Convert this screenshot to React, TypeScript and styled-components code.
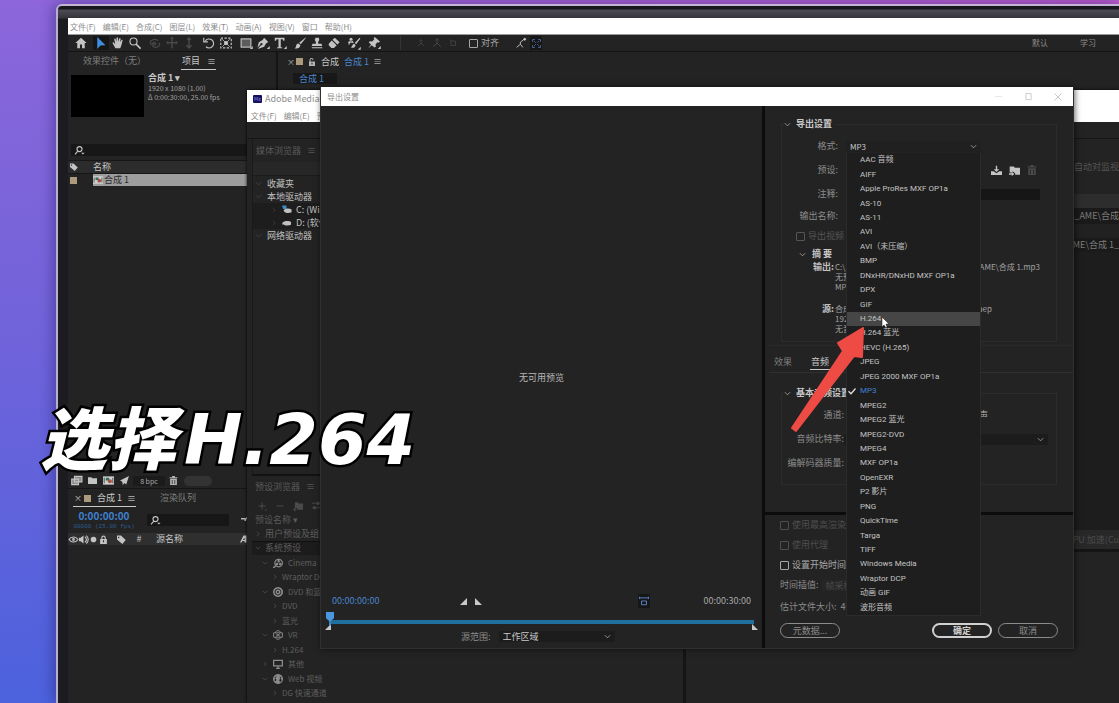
import React from 'react';
import styled, { createGlobalStyle, css } from 'styled-components';

const Global = createGlobalStyle`
  * { box-sizing: border-box; }
  body { margin: 0; overflow: hidden; }
  body, button, input, select {
    font-family: "Noto Sans CJK SC", "Noto Sans", sans-serif;
    font-size: 9px;
    line-height: 12px;
  }
  button, input, select { color: inherit; margin: 0; }
  ul { list-style: none; margin: 0; padding: 0; }
`;

/* ---------- desk and monitor ---------- */

const Desk = styled.div`
  height: 100vh;
  overflow: hidden;
  display: flex;
  position: relative;
  padding: 4px 0 0 56px;
  background:
    linear-gradient(90deg, rgba(190, 90, 200, 0) 0%, rgba(190, 90, 200, 0.9) 100%) top / 100% 5px no-repeat,
    linear-gradient(180deg, #8c66da 0%, #7263da 45%, #4c62dd 100%);
`;

const Bezel = styled.div`
  flex: 1;
  min-width: 0;
  display: flex;
  padding: 12px 0 0 10px;
  border-top: 2px solid #c3b4d6;
  border-left: 2px solid #b9afd2;
  border-top-left-radius: 6px;
  background: linear-gradient(180deg, #18181c 0, #18181c 3px, #4c4a52 4px, #35343b 12px, #1b1b20 13px);
  box-shadow: -2px 0 14px rgba(30, 20, 90, 0.45);
`;

const Screen = styled.main`
  flex: 1;
  min-width: 0;
  position: relative;
  display: flex;
  flex-direction: column;
  background: #232323;
  color: #b4b4b4;
  overflow: hidden;
`;

/* ---------- shared parts ---------- */

const MenuBar = styled.nav<{ $h: number }>`
  flex: none;
  height: ${(p) => p.$h}px;
  display: flex;
  align-items: center;
  gap: 7px;
  padding: 2px 4px 0 2px;
  background: #fff;
  color: #8d8d8d;
`;

const MenuItem = styled.button`
  border: 0;
  padding: 0;
  background: none;
  font-size: 8px;
  white-space: nowrap;
`;

const Tool = styled.button<{ $dim?: boolean; $on?: boolean; $w?: number }>`
  flex: none;
  width: ${(p) => p.$w ?? 16}px;
  height: 14px;
  padding: 0;
  border: 0;
  display: grid;
  place-items: center;
  background: ${(p) => (p.$on ? '#161616' : 'none')};
  color: ${(p) => (p.$dim ? '#4a4a4a' : '#c4c4c4')};
`;

const Svg = styled.svg<{ $s?: number }>`
  flex: none;
  display: block;
  width: ${(p) => p.$s ?? 13}px;
  height: ${(p) => p.$s ?? 13}px;
  fill: currentColor;
  overflow: visible;
`;

type IconName =
  | 'home' | 'arrow' | 'hand' | 'zoom' | 'orbit' | 'pan' | 'dolly' | 'rotate' | 'anchor' | 'rect' | 'pen'
  | 'type' | 'brush' | 'stamp' | 'eraser' | 'roto' | 'pin' | 'axis' | 'snap' | 'expand' | 'menu' | 'find'
  | 'tag' | 'comp' | 'footage' | 'folder' | 'rocket' | 'trash' | 'lock' | 'unlock' | 'eye' | 'sound' | 'dot'
  | 'drive' | 'osdrive' | 'disc' | 'reel' | 'vr' | 'monitor' | 'globe' | 'plus' | 'minus' | 'newfolder' | 'sliders'
  | 'save' | 'import' | 'down' | 'right' | 'check' | 'shy' | 'font' | 'cube';

const line = { fill: 'none', stroke: 'currentColor', strokeWidth: 1.5 } as const;

const shapes: Record<IconName, React.ReactNode> = {
  home: <path d="M8 1 0.5 8H3v7h3.600v-5h2.800v5H13V8h2.500z" />,
  arrow: <path d="M3 0v16l4.200-4.600L14 11z" fill="#3f8ee0" />,
  hand: <path d="M4.500 15 1 8.500c-.6-1.200.7-1.800 1.500-1L4.300 9.500 3 3c0-1.200 1.600-1.300 1.900-.2L6 6.500V1.300C6 0 7.900 0 8 1.300l.3 5L9.600 2c.4-1.200 2-.8 1.800.5l-.6 4.500 1.800-3c.7-.9 1.900-.3 1.500.8L12.500 11 11 15z" />,
  zoom: <g {...line}><circle cx="6" cy="6" r="4.700" /><path d="m9.500 9.500 6 6" strokeWidth="2" /></g>,
  orbit: <g {...line}><path d="M3 10a5 3.500 0 1 1 9-5M13 8a5 3.500 0 1 1-6-1" /><circle cx="7.500" cy="9" r="1.500" /></g>,
  pan: <g {...line} strokeWidth={2}><path d="M8 0v15M1 7.500h14" /><path d="m5.500 2.500 2.500-2 2.500 2M3 5 1 7.500 3 10M13 5l2 2.500-2 2.500" strokeWidth={1} /></g>,
  dolly: <g {...line} strokeWidth={2}><path d="M8 0v14M4.500 11 8 14.500l3.500-3.500M5.500 3h5" /></g>,
  rotate: <g {...line}><path d="M3 5.500a6 6 0 1 1 1 7.500" /><path d="M1 1v5.500h5.500" /></g>,
  anchor: <g {...line}><rect x="1" y="1.500" width="14" height="13" strokeDasharray="3 2" /><circle cx="8" cy="8" r="2" fill="currentColor" /><path d="m3 3 10 10M13 3 3 13" strokeWidth={1} /></g>,
  rect: <g><rect x="1.500" y="2.500" width="13" height="11" fill="#5c5c5c" stroke="currentColor" strokeWidth="1.500" /><path d="M17 12v4h-4z" /></g>,
  pen: <path d="M9.500 1 15 6.500 12 8.500 9.500 13 2 15.500 1.500 15l4-4a1.500 1.500 0 1 0-1-1l-4 4L2.500 7 7.500 4zM17 12v4h-4z" />,
  type: <path d="M1 1h13v4h-1.500L11.500 3H9v10.500l2 .5v1H4v-1l2-.5V3H3.500l-1 2H1zM17 12v4h-4z" />,
  brush: <path d="M15.500.5 7 7.500 9 9.500 16 1zM6 8.500c-2 .2-3 1.500-3.200 3.500-.2 1.500-1 2.500-2.300 3 3.500 1 7.500.3 8-4z" />,
  stamp: <path d="M6 1h4.500l.5 3-1.500 2.500V9H14l1 3H1l1-3h4.500V6.500L5 4zM1 13.500h14V15H1z" />,
  eraser: <path d="m9 1 6.500 6-3 3L6 3.800zM5 4.800l6.500 6.200L8 14.500H4.500L1 11V9z" />,
  roto: <g><path d="M15.500 1 9 8l1.800 1.500L16.500 2zM8 9c-2 .5-2 3-4 5 2.500.8 6 0 6-3.500z" /><circle cx="4" cy="3" r="2" /><path d="M3 5 1 10M5 5l2 3M0 7h7" {...line} /><path d="M17 13v4h-4z" /></g>,
  pin: <path d="m9 0 7 6-2 1.500-1.500-.5-2.500 3 .5 3-2 1L5 11l-4.500 4L4 10 1 7l1.500-1.500 3 .5 3-3L7.500 1.500zM17 12v4h-4z" />,
  axis: <g {...line}><path d="M8 2v6l-6 6M8 8l6 6M5 4l3-3 3 3" /></g>,
  snap: <g {...line}><path d="m1 15 6-5V6M7 10l4 5M8 6l6-5" /><circle cx="14" cy="2" r="1.500" fill="currentColor" /></g>,
  expand: <g {...line} stroke="#5b76bb"><path d="M1 5V1h4M11 1h4v4M15 11v4h-4M5 15H1v-4M4 4l2.500 2.500M12 4 9.500 6.500M4 12l2.500-2.500M12 12 9.500 9.500" /></g>,
  menu: <path d="M1 2.500h14V4H1zM1 7.300h14v1.500H1zM1 12h14v1.500H1z" />,
  find: <g {...line} strokeWidth={2}><circle cx="8" cy="5.500" r="4.500" /><path d="m5 9-5 6" /><path d="M11 12h6l-3 3z" fill="currentColor" stroke="none" /></g>,
  tag: <path fillRule="evenodd" d="M0 1h7l8.500 8-6 7L0 8zm3 2a1.300 1.300 0 1 0 .1 0z" />,
  comp: <g><path d="M0 2h16v12H0z" fill="#d0d0d0" /><path d="M4 4h5v4H4z" fill="#2c6f5e" /><circle cx="10" cy="9" r="3" fill="#a5543f" /><path d="M1 4h1.500v8H1zM13.500 4H15v8h-1.500z" fill="#555" /></g>,
  footage: <g {...line}><path d="M5 2h11v8H5zM1 6h10v8H1z" fill="#8d8d8d" /></g>,
  folder: <path d="M0 2h6l1.500 2H16v10H0z" />,
  rocket: <path d="M16 0 0 8l4 2 1 6 3-3.500L11 15z" />,
  trash: <path fillRule="evenodd" d="M5.500 0h5v2H15v2H1V2h4.500zM2 5h12v11H2zm3 2v7h1.300V7zm4.700 0v7H11V7z" />,
  lock: <path fillRule="evenodd" d="M4 7V5a4 4 0 0 1 8 0v2h2v9H2V7zm2 0h4V5a2 2 0 0 0-4 0zm1 2.500v3.500h2V9.500z" />,
  unlock: <path fillRule="evenodd" d="M3 7V4a4 4 0 0 1 8 0h-2a2 2 0 0 0-4 0v3h9v9H2V7zm4 2.500v3.500h2V9.500z" />,
  eye: <g {...line} strokeWidth={2}><path d="M0 8c4-6 12-6 16 0-4 6-12 6-16 0z" /><circle cx="8" cy="8" r="1.500" /></g>,
  sound: <g><path d="M0 5h3l5-4v14l-5-4H0z" /><path d="M10.500 3a6 6 0 0 1 0 10M13 1a9 9 0 0 1 0 14" {...line} strokeWidth={2} /></g>,
  dot: <circle cx="8" cy="8" r="5" />,
  drive: <path d="M1 8c2-3 11-4 15-1v5c-4 2-11 2-14-1L0 12z" />,
  osdrive: <g><path d="M3 9c2-3 10-4 14-1v5c-4 2-10 2-13-1z" /><path d="M0 1h8v6H2z" fill="#3f8ec0" /></g>,
  disc: <path fillRule="evenodd" d="M8 0a8 8 0 1 0 .1 0zm0 2.500a5.500 5.500 0 1 1-.1 0zm0 1.500a4 4 0 1 0 .1 0zm0 2.500a1.500 1.500 0 1 1-.1 0z" />,
  reel: <g {...line} strokeWidth={2}><circle cx="9" cy="8" r="6" /><path d="M0 15c3 0 4-2 4-4" /><circle cx="9" cy="5" r="1" /><circle cx="6.500" cy="9.500" r="1" /><circle cx="11.500" cy="9.500" r="1" /></g>,
  vr: <g {...line} strokeWidth={1.5}><path d="M1 4.500h14v7H1z" /><path d="M4 4.500C4 0 12 0 12 4.500M4 11.500c0 4.500 8 4.500 8 0M5 6l6 4M11 6l-6 4" /></g>,
  monitor: <g {...line} strokeWidth={2}><path d="M1 2h14v9H1zM5 15h6M8 11v4" /></g>,
  globe: <g><path d="M8 0a8 8 0 1 0 .1 0z" /><path d="M7 1 5 4 2 5l3 3v4l-3-2M10 3l4 3-3 1-1 4 2 2 2-3" fill="#232323" /></g>,
  plus: <path d="M7 1h2v6h6v2H9v6H7V9H1V7h6zM17 13v4h-4z" />,
  minus: <path d="M1 7h14v2H1z" />,
  newfolder: <path d="M3 2h5l1 2h7v10H7v-3H3zM2 11h2v2h2v1.500H4v2H2v-2H0V13h2z" />,
  sliders: <g {...line}><path d="M0 4h16M0 12h16" /><path d="M9 2h3v4H9zM3 10h3v4H3z" fill="currentColor" /></g>,
  save: <path d="M7 1h2v5h3L8 10 4 6h3zM0 9h4l4 3 4-3h4v5.500H0z" />,
  import: <path d="M1 2h6l1.500 2H16v10H9v-2l-4-3v2H1zM0 12h4v-2l4 3-4 3v-2H0z" />,
  down: <path d="m2 5 6 6 6-6" {...line} />,
  right: <path d="m5 2 6 6-6 6" {...line} />,
  check: <path d="m1 8.500 5 5L15 3" {...line} strokeWidth={2.500} />,
  shy: <path d="M0 4h10V2l6 3v6h-2V7h-4v3H7V7H0z" />,
  font: <path fillRule="evenodd" d="m7 1-7 14h3l1.500-3H9v3h4V1zm2 4v5H5.500z" />,
  cube: <g {...line}><path d="M4 4h9v9H4zM1 1l3 3" /></g>,
};

const Icon = ({ n, s }: { n: IconName; s?: number }) => (
  <Svg viewBox="0 0 16 16" $s={s} aria-hidden="true">{shapes[n]}</Svg>
);

const Swatch = styled.span`
  flex: none;
  width: 7px;
  height: 7px;
  background: #ab9a7c;
`;

const CloseMark = styled.span`
  width: 4px;
  font-size: 8px;
`;

const Line = styled.span<{ $blue?: boolean; $bold?: boolean; $small?: boolean }>`
  white-space: nowrap;
  color: ${(p) => (p.$blue ? '#4a86cc' : '#c6c6c6')};
  font-weight: ${(p) => (p.$bold ? 700 : 400)};
  ${(p) => p.$small && css`font-size: 7px; line-height: 9px; color: #a2a2a2;`}
`;

/* ---------- After Effects ---------- */

const ToolBar = styled.div`
  flex: none;
  height: 18px;
  display: flex;
  align-items: center;
  gap: 4px;
  padding: 0 23px 0 5px;
  border-top: 1px solid #9a9a9a;
  border-bottom: 1px solid #131313;
`;

const ToolGroup = styled.div<{ $push?: boolean }>`
  display: flex;
  align-items: center;
  gap: 1px;
  ${(p) => p.$push && css`margin-left: auto; gap: 32px; color: #8c8c8c;`}
`;

const Rule = styled.span`
  width: 1px;
  height: 14px;
  margin: 0 8px 0 14px;
  background: #343434;
`;

const SnapLabel = styled.label`
  display: flex;
  align-items: center;
  gap: 3px;
  margin: 0 10px 0 5px;
  color: #a5a5a5;
`;

const Tick = styled.input`
  appearance: none;
  flex: none;
  width: 9px;
  height: 9px;
  border: 1px solid currentColor;
  border-radius: 1px;
`;

const Workspaces = styled.div`
  flex: 1;
  min-height: 0;
  display: grid;
  grid-template-columns: 210px 1fr;
`;

const SidePanel = styled.section`
  min-width: 0;
  display: flex;
  flex-direction: column;
  border-right: 2px solid #141414;
`;

const Tabs = styled.div<{ $pad: number; $gap: number }>`
  flex: none;
  height: 18px;
  display: flex;
  align-items: center;
  gap: ${(p) => p.$gap}px;
  padding: 1px 0 0 ${(p) => p.$pad}px;
`;

const Tab = styled.button<{ $on?: boolean; $gap?: number }>`
  height: 16px;
  padding: 0 1px;
  display: flex;
  align-items: center;
  gap: ${(p) => p.$gap ?? 8}px;
  border: 0;
  border-bottom: 1px solid ${(p) => (p.$on ? '#c8c8c8' : 'transparent')};
  background: none;
  color: ${(p) => (p.$on ? '#c8c8c8' : '#7e7e7e')};
  white-space: nowrap;
`;

const AssetInfo = styled.div`
  flex: none;
  display: flex;
  gap: 4px;
  height: 74px;
  padding: 5px 0 0 3px;
`;

const Thumb = styled.div`
  flex: none;
  width: 73px;
  height: 42px;
  background: #000;
`;

const AssetText = styled.div`
  display: flex;
  flex-direction: column;
  margin-top: -3px;
`;

const SearchBox = styled.label<{ $w?: number }>`
  flex: none;
  height: 12px;
  width: ${(p) => (p.$w ? `${p.$w}px` : 'auto')};
  margin-left: ${(p) => (p.$w ? 0 : 3)}px;
  display: flex;
  align-items: center;
  padding-left: 4px;
  background: #171717;
  color: #c4c4c4;
`;

const SearchInput = styled.input`
  flex: 1;
  min-width: 0;
  height: 12px;
  border: 0;
  padding: 0;
  background: none;
  outline: none;
`;

const ProjectTable = styled.table`
  margin-top: 4px;
  width: 100%;
  border-collapse: collapse;
  color: #c4c4c4;
  th { height: 13px; padding: 0 0 0 2px; text-align: left; font-weight: 400; background: #2c2c2c; border-top: 1px solid #161616; }
  td { height: 13px; padding: 0 0 0 2px; border-top: 1px solid #161616; }
  th:first-child, td:first-child { width: 23px; }
`;

const RowName = styled.span`
  display: flex;
  align-items: center;
  height: 12px;
  gap: 1px;
  background: #9d9d9d;
  color: #2c2c2c;
`;

const Spacer = styled.div`flex: 1;`;

const ProjectFooter = styled.div`
  flex: none;
  height: 16px;
  display: flex;
  align-items: center;
  border-bottom: 1px solid #151515;
`;

const Depth = styled.button`
  width: 32px;
  height: 10px;
  margin: 0 4px 0 1px;
  padding: 0;
  border: 0;
  background: #1b1b1b;
  color: #aaa;
  font-size: 7px;
  line-height: 10px;
`;

const Pill = styled.span`
  width: 28px;
  height: 10px;
  margin-left: 6px;
  border-radius: 5px;
  background: #333;
`;

const Timeline = styled.section`
  flex: none;
  height: 214px;
`;

const TimeRow = styled.div`
  height: 26px;
  display: flex;
  align-items: center;
  gap: 12px;
  padding-left: 5px;
`;

const Clock = styled.div`
  display: flex;
  flex-direction: column;
  align-items: center;
  width: 62px;
  color: #3f80cf;
  font-size: 10px;
  font-weight: 700;
  small { font: 400 6px/9px "Liberation Mono", monospace; color: #2d5c91; white-space: nowrap; }
`;

const LayerHead = styled.div`
  height: 12px;
  display: flex;
  align-items: center;
  gap: 1px;
  padding-left: 1px;
  background: #2f2f2f;
  color: #c4c4c4;
`;

const LayerName = styled.span`
  margin: 0 56px 0 11px;
`;

const CompPanel = styled.section`
  min-width: 0;
`;

const CompTabs = styled.div`
  height: 18px;
  display: flex;
  align-items: center;
  gap: 5px;
  padding: 1px 0 0 9px;
`;

const Crumb = styled.button`
  width: 44px;
  height: 11px;
  margin: 3px 0 0 15px;
  padding: 0 6px;
  border: 0;
  background: #181818;
  color: #4a86cc;
  text-align: left;
  line-height: 11px;
`;

/* ---------- Media Encoder ---------- */

const EncoderWindow = styled.section`
  position: absolute;
  top: 72px;
  left: 179px;
  right: 0;
  bottom: 0;
  display: flex;
  flex-direction: column;
  background: #232323;
  box-shadow: 0 0 3px #000;
`;

const WinTitle = styled.header<{ $h: number }>`
  flex: none;
  height: ${(p) => p.$h}px;
  display: flex;
  align-items: center;
  gap: 3px;
  padding: 0 7px 0 6px;
  background: #fff;
  color: #8d8d8d;
`;

const AppBadge = styled.span`
  width: 9px;
  height: 8px;
  border-radius: 1px;
  background: #14115e;
  color: #8d8de0;
  font-size: 5px;
  line-height: 8px;
  text-align: center;
`;

const EncoderGrid = styled.div`
  flex: 1;
  min-height: 0;
  display: grid;
  grid-template-columns: 439px 1fr;
  margin-top: 16px;
  border-top: 1px solid #151515;
`;

const EncoderSide = styled.div`
  min-width: 0;
  display: flex;
  flex-direction: column;
  padding-left: 5px;
  border-right: 3px solid #151515;
  color: #c0c0c0;
`;

const MediaPanel = styled.section`
  flex: 1;
  border-left: 1px solid #1a1a1a;
`;

const PanelTitle = styled.h2<{ $h: number }>`
  flex: none;
  margin: 0;
  height: ${(p) => p.$h}px;
  display: flex;
  align-items: center;
  gap: 7px;
  padding-left: 3px;
  font-size: 9px;
  font-weight: 400;
  color: #5a5a5a;
`;

const Band = styled.div`
  height: 14px;
  background: #272727;
  border-bottom: 1px solid #1b1b1b;
`;

const DriveList = styled.ul`
  padding-top: 1px;
`;

const Drive = styled.li<{ $child?: boolean }>`
  height: 13px;
  display: flex;
  align-items: center;
  gap: 5px;
  padding-left: ${(p) => (p.$child ? 18 : 2)}px;
  background: ${(p) => (p.$child ? '#1d1d1d' : 'none')};
  svg:first-child { color: #4c4c4c; }
`;

const PresetPanel = styled.section`
  flex: none;
  height: 229px;
  display: flex;
  flex-direction: column;
  border-top: 2px solid #121212;
  color: #5e5e5e;
`;

const PresetTools = styled.div`
  flex: none;
  height: 17px;
  display: flex;
  align-items: center;
  gap: 2px;
  padding-left: 2px;
`;

const PresetList = styled.ul`
  flex: 1;
  display: grid;
  grid-auto-rows: 1fr;
  padding-bottom: 3px;
`;

const Preset = styled.li<{ $level: number; $head?: boolean }>`
  display: flex;
  align-items: center;
  gap: 4px;
  padding-left: ${(p) => [3, 10, 20][p.$level]}px;
  background: ${(p) => (p.$head ? '#1c1c1c' : 'none')};
  border-top: 1px solid ${(p) => (p.$head ? '#101010' : 'transparent')};
  font-size: ${(p) => (p.$level ? 8 : 9)}px;
  white-space: nowrap;
`;

const Bright = styled.span`
  display: grid;
  width: 12px;
  place-items: center;
  color: #8c8c8c;
`;

const QueueSide = styled.div`
  min-width: 0;
  display: flex;
  flex-direction: column;
  text-align: right;
  overflow: hidden;
  white-space: nowrap;
`;

const QueueRow = styled.div<{ $h: number; $tone: string; $bg: string }>`
  flex: none;
  height: ${(p) => p.$h}px;
  display: flex;
  align-items: center;
  justify-content: flex-end;
  color: ${(p) => p.$tone};
  background: ${(p) => p.$bg};
`;

const QueueSpace = styled.div`
  flex: 1;
  background: #1d1d1d;
`;

const QueueFoot = styled.div`
  flex: none;
  height: 154px;
  border-top: 3px solid #151515;
`;

/* ---------- export dialog ---------- */

const Dialog = styled.section`
  position: absolute;
  top: 69px;
  left: 252px;
  right: 45px;
  bottom: 54px;
  display: flex;
  flex-direction: column;
  background: #232323;
  border: 1px solid #303030;
  border-top: 0;
  box-shadow: 1px 0 6px rgba(0, 0, 0, 0.6);
`;

const WinButtons = styled.div`
  margin-left: auto;
  display: flex;
  gap: 14px;
  color: #b5b5b5;
`;

const DialogBody = styled.div`
  flex: 1;
  min-height: 0;
  display: flex;
`;

const Preview = styled.div`
  flex: 1;
  min-width: 0;
  display: flex;
  flex-direction: column;
  border-right: 3px solid #0c0c0c;
`;

const NoPreview = styled.p`
  flex: 1;
  margin: 0;
  padding-top: 56px;
  display: grid;
  place-items: center;
  color: #b8b8b8;
`;

const Transport = styled.div`
  height: 14px;
  display: grid;
  grid-template-columns: 1fr auto 1fr;
  align-items: center;
  padding: 0 11px;
`;

const Markers = styled.div`
  display: flex;
  gap: 8px;
  margin-right: 142px;
  color: #c8c8c8;
`;

const TransportEnd = styled.div`
  display: flex;
  align-items: center;
  justify-content: flex-end;
  gap: 54px;
  color: #a8a8a8;
`;

const Scrub = styled.input`
  appearance: none;
  display: block;
  height: 16px;
  width: auto;
  margin: 3px 8px 0 5px;
  background: linear-gradient(#1f6f9f, #1f6f9f) 5px 9px / 100% 4px no-repeat;
  &::-webkit-slider-thumb {
    appearance: none;
    width: 8px;
    height: 14px;
    background: linear-gradient(#4a97e0, #4a97e0);
    clip-path: polygon(0 0, 100% 0, 100% 45%, 60% 65%, 60% 100%, 40% 100%, 40% 65%, 0 45%);
  }
`;

const Handles = styled.div`
  display: flex;
  justify-content: space-between;
  height: 4px;
  padding: 0 4px;
  color: #c8c8c8;
  svg { margin-top: -3px; }
`;

const RangeRow = styled.label`
  display: flex;
  align-items: center;
  gap: 8px;
  height: 11px;
  margin-bottom: 6px;
  padding-left: 140px;
  color: #8c8c8c;
`;

const SelectBox = styled.span<{ $w?: number; $bg?: string; $tone?: string }>`
  position: relative;
  display: flex;
  align-items: center;
  width: ${(p) => (p.$w ? `${p.$w}px` : 'auto')};
  flex: ${(p) => (p.$w ? 'none' : 1)};
  height: 11px;
  padding-right: 4px;
  background: ${(p) => p.$bg ?? '#1c1c1c'};
  color: ${(p) => p.$tone ?? '#c8c8c8'};
`;

const Select = styled.select<{ $small?: boolean }>`
  appearance: none;
  flex: 1;
  min-width: 0;
  height: 11px;
  padding: 0 4px;
  border: 0;
  background: none;
  font-size: ${(p) => (p.$small ? 8 : 9)}px;
  line-height: 11px;
`;

const Settings = styled.form`
  flex: none;
  width: 308px;
  display: flex;
  flex-direction: column;
  position: relative;
  color: #8c8c8c;
`;

const Group = styled.fieldset<{ $top: number; $bottom: number }>`
  min-width: 0;
  margin: ${(p) => p.$top}px 16px 0;
  padding: 4px 8px ${(p) => p.$bottom}px 8px;
  border: 1px solid #2c2c2c;
  legend {
    margin-left: -6px;
    padding: 0 4px 0 0;
    display: flex;
    align-items: center;
    gap: 5px;
    color: #c8c8c8;
    font-weight: 700;
  }
`;

const Field = styled.div<{ $h?: number; $label: number }>`
  height: ${(p) => p.$h ?? 24}px;
  display: grid;
  grid-template-columns: ${(p) => p.$label}px 1fr;
  align-items: center;
  > label, > span:first-child { justify-self: end; white-space: nowrap; }
`;

const FieldEnd = styled.div`
  display: flex;
  align-items: center;
  justify-content: flex-end;
  height: 14px;
  gap: 2px;
  padding-right: 8px;
`;

const FormatBox = styled.div`
  position: relative;
  width: 135px;
  height: 14px;
  margin-left: 8px;
  display: flex;
  align-items: center;
`;

const TextBox = styled.input`
  height: 11px;
  margin: 0 8px;
  border: 0;
  background: #161616;
`;

const CheckRow = styled.label<{ $h: number; $tone: string; $pad?: number }>`
  height: ${(p) => p.$h}px;
  display: flex;
  align-items: center;
  gap: 3px;
  padding-left: ${(p) => p.$pad ?? 0}px;
  color: ${(p) => p.$tone};
  white-space: nowrap;
`;

const SummaryHead = styled.div`
  height: 16px;
  display: flex;
  align-items: center;
  gap: 6px;
  padding-left: 9px;
  color: #c8c8c8;
  font-weight: 700;
`;

const Summary = styled.dl<{ $gap?: boolean }>`
  margin: ${(p) => (p.$gap ? 12 : 0)}px 0 0;
  display: grid;
  grid-template-columns: 44px 1fr;
  font-size: 8px;
  line-height: 10px;
  color: #a2a2a2;
  dt { text-align: right; font-weight: 700; font-size: 9px; color: #c0c0c0; }
  dd { margin: 0 8px 0 1px; }
`;

const PathLine = styled.div<{ $end?: number }>`
  display: flex;
  justify-content: space-between;
  padding-right: ${(p) => p.$end ?? 0}px;
  white-space: nowrap;
`;

const ChannelPick = styled.div`
  padding-right: 60px;
  text-align: right;
  color: #b0b0b0;
`;

const SettingTabs = styled.div`
  height: 28px;
  margin: 3px 0 0 4px;
  display: flex;
  align-items: flex-end;
  gap: 17px;
  padding: 0 4px 2px;
  border-top: 1px solid #2a2a2a;
  border-bottom: 1px solid #2f2f2f;
`;

const Options = styled.div`
  flex: none;
  padding: 0 15px 10px;
  border-top: 3px solid #0c0c0c;
`;

const Actions = styled.div`
  display: flex;
  gap: 6px;
  margin-top: 4px;
`;

const Push = styled.button<{ $main?: boolean; $first?: boolean }>`
  width: 60px;
  height: 15px;
  padding: 0;
  border: ${(p) => (p.$main ? '2px solid #d0d0d0' : '1px solid #8c8c8c')};
  border-radius: 8px;
  background: none;
  color: ${(p) => (p.$main ? '#d0d0d0' : '#8c8c8c')};
  font-weight: ${(p) => (p.$main ? 700 : 400)};
  line-height: 11px;
  margin-right: ${(p) => (p.$first ? 'auto' : '0')};
`;

const FormatMenu = styled.ul`
  position: absolute;
  z-index: 2;
  top: 14px;
  left: 0;
  width: 135px;
  height: 463px;
  display: flex;
  flex-direction: column;
  background: #1e1e1e;
  border: 1px solid #2b2b2b;
  border-top: 0;
`;

const FormatItem = styled.li<{ $hover?: boolean; $picked?: boolean }>`
  flex: 1;
  display: flex;
  align-items: center;
  gap: 4px;
  padding-left: ${(p) => (p.$picked ? 1 : 13)}px;
  background: ${(p) => (p.$hover ? '#464646' : 'none')};
  color: ${(p) => (p.$picked ? '#3f80cf' : '#c4c4c4')};
  font-family: Roboto, "Noto Sans CJK SC", sans-serif;
  font-size: 8px;
  white-space: nowrap;
  svg { color: #e0e0e0; }
`;

const Pointer = styled.svg`
  position: absolute;
  z-index: 3;
  top: 208px;
  left: 20px;
  width: 110px;
  height: 122px;
`;

const Caption = styled.p`
  position: absolute;
  z-index: 4;
  top: 390px;
  left: 40px;
  margin: 0;
  display: flex;
  align-items: baseline;
  gap: 8px;
  color: #fff;
  font: italic 900 68px/90px "Noto Sans CJK SC", sans-serif;
  -webkit-text-stroke: 5px #000;
  paint-order: stroke fill;
  white-space: nowrap;
  b { font: italic 700 70px/90px "DejaVu Sans", sans-serif; }
`;

const menus = ['文件(F)', '编辑(E)', '合成(C)', '图层(L)', '效果(T)', '动画(A)', '视图(V)', '窗口', '帮助(H)'];

const tools: IconName[][] = [
  ['home'],
  ['arrow', 'hand', 'zoom'],
  ['orbit', 'pan', 'dolly'],
  ['rotate', 'anchor'],
  ['rect', 'pen', 'type'],
  ['brush', 'stamp', 'eraser'],
  ['roto'],
  ['pin'],
];

const dimTools: IconName[] = ['orbit', 'pan', 'dolly'];

const formats = [
  'AAC 音频', 'AIFF', 'Apple ProRes MXF OP1a', 'AS-10', 'AS-11', 'AVI', 'AVI（未压缩）', 'BMP',
  'DNxHR/DNxHD MXF OP1a', 'DPX', 'GIF', 'H.264', 'H.264 蓝光', 'HEVC (H.265)', 'JPEG',
  'JPEG 2000 MXF OP1a', 'MP3', 'MPEG2', 'MPEG2 蓝光', 'MPEG2-DVD', 'MPEG4', 'MXF OP1a', 'OpenEXR',
  'P2 影片', 'PNG', 'QuickTime', 'Targa', 'TIFF', 'Windows Media', 'Wraptor DCP', '动画 GIF', '波形音频',
];

const presets: { text: string; level: number; icon?: IconName; head?: boolean; closed?: boolean }[] = [
  { text: '用户预设及组', level: 0, closed: true },
  { text: '系统预设', level: 0, head: true },
  { text: 'Cinema', level: 1, icon: 'reel' },
  { text: 'Wraptor DCP', level: 2 },
  { text: 'DVD 和蓝光', level: 1, icon: 'disc' },
  { text: 'DVD', level: 2 },
  { text: '蓝光', level: 2 },
  { text: 'VR', level: 1, icon: 'vr' },
  { text: 'H.264', level: 2 },
  { text: '其他', level: 1, icon: 'monitor', closed: true },
  { text: 'Web 视频', level: 1, icon: 'globe' },
  { text: 'DG 快速通道', level: 2 },
];

const AfterEffects = () => (
  <>
    <MenuBar $h={16}>{menus.map((m) => <MenuItem key={m}>{m}</MenuItem>)}</MenuBar>
    <ToolBar>
      {tools.map((group, i) => (
        <ToolGroup key={i}>
          {group.map((n) => (
            <Tool key={n} aria-label={n} $on={n === 'arrow'} $dim={dimTools.includes(n)}><Icon n={n} s={12} /></Tool>
          ))}
        </ToolGroup>
      ))}
      <Rule />
      <ToolGroup>
        <Tool $dim $w={15} aria-label="local axis"><Icon n="axis" s={8} /></Tool>
        <Tool $dim $w={15} aria-label="world axis"><Icon n="axis" s={10} /></Tool>
        <Tool $dim $w={15} aria-label="view axis"><Icon n="cube" s={8} /></Tool>
      </ToolGroup>
      <SnapLabel><Tick type="checkbox" />对齐</SnapLabel>
      <ToolGroup>
        <Tool aria-label="snap edges"><Icon n="snap" s={10} /></Tool>
        <Tool $on aria-label="snap bounds" $w={12}><Icon n="expand" s={9} /></Tool>
      </ToolGroup>
      <ToolGroup $push><MenuItem>默认</MenuItem><MenuItem>学习</MenuItem></ToolGroup>
    </ToolBar>
    <Workspaces>
      <SidePanel>
        <Tabs $pad={14} $gap={34}>
          <Tab>效果控件（无）</Tab>
          <Tab $on>项目<Icon n="menu" s={7} /></Tab>
        </Tabs>
        <AssetInfo>
          <Thumb />
          <AssetText>
            <Line $bold>合成 1 ▾</Line>
            <Line $small>1920 x 1080 (1.00)</Line>
            <Line $small>Δ 0:00:30:00, 25.00 fps</Line>
          </AssetText>
        </AssetInfo>
        <SearchBox><Icon n="find" s={9} /><SearchInput aria-label="搜索项目" /></SearchBox>
        <ProjectTable>
          <thead><tr><th><Icon n="tag" s={8} /></th><th>名称</th></tr></thead>
          <tbody><tr><td><Swatch as="div" /></td><td><RowName><Icon n="comp" s={10} />合成 1</RowName></td></tr></tbody>
        </ProjectTable>
        <Spacer />
        <ProjectFooter>
          <Tool aria-label="interpret"><Icon n="footage" s={11} /></Tool>
          <Tool aria-label="folder"><Icon n="folder" s={9} /></Tool>
          <Tool aria-label="composition"><Icon n="comp" s={11} /></Tool>
          <Tool aria-label="adjust"><Icon n="rocket" s={9} /></Tool>
          <Depth>8 bpc</Depth>
          <Icon n="trash" s={9} />
          <Pill />
        </ProjectFooter>
        <Timeline>
          <Tabs $pad={5} $gap={23}>
            <Tab $on $gap={6}><CloseMark>×</CloseMark><Swatch />合成 1<Icon n="menu" s={7} /></Tab>
            <Tab>渲染队列</Tab>
          </Tabs>
          <TimeRow>
            <Clock>0:00:00:00<small>00000 (25.00 fps)</small></Clock>
            <SearchBox $w={82}><Icon n="find" s={9} /><SearchInput aria-label="搜索图层" /></SearchBox>
            <Icon n="shy" s={8} />
          </TimeRow>
          <LayerHead>
            <Icon n="eye" s={9} /><Icon n="sound" s={9} /><Icon n="dot" s={9} /><Icon n="lock" s={9} />
            <Tool as="span" $w={24}><Icon n="tag" s={9} /></Tool>
            <Tool as="span" $w={10}>#</Tool>
            <LayerName>源名称</LayerName>
            <Icon n="font" s={8} />
          </LayerHead>
        </Timeline>
      </SidePanel>
      <CompPanel>
        <CompTabs>
          <CloseMark>×</CloseMark><Swatch /><Icon n="unlock" s={8} />
          <Line>合成</Line><Line $blue>合成 1</Line><Icon n="menu" s={7} />
        </CompTabs>
        <Crumb>合成 1</Crumb>
      </CompPanel>
    </Workspaces>
  </>
);

const MediaEncoder = () => (
  <EncoderWindow>
    <WinTitle $h={18}><AppBadge>Me</AppBadge>Adobe Media Encoder</WinTitle>
    <MenuBar $h={14}><MenuItem>&nbsp;文件(F)</MenuItem><MenuItem>编辑(E)</MenuItem><MenuItem>预设(P)</MenuItem></MenuBar>
    <EncoderGrid>
      <EncoderSide>
        <MediaPanel>
          <PanelTitle $h={23}>媒体浏览器<Icon n="menu" s={7} /></PanelTitle>
          <Band />
          <DriveList>
            <Drive><Icon n="down" s={7} />收藏夹</Drive>
            <Drive><Icon n="down" s={7} />本地驱动器</Drive>
            <Drive $child><Icon n="right" s={6} /><Icon n="osdrive" s={9} />C: (Windows)</Drive>
            <Drive $child><Icon n="right" s={6} /><Icon n="drive" s={9} />D: (软件)</Drive>
            <Drive><Icon n="down" s={7} />网络驱动器</Drive>
          </DriveList>
        </MediaPanel>
        <PresetPanel>
          <PanelTitle $h={21}>预设浏览器<Icon n="menu" s={7} /></PanelTitle>
          <PresetTools>
            <Tool $dim><Icon n="plus" s={8} /></Tool><Tool $dim><Icon n="minus" s={8} /></Tool>
            <Tool $dim><Icon n="newfolder" s={10} /></Tool><Tool $dim><Icon n="sliders" s={9} /></Tool>
          </PresetTools>
          <PanelTitle as="div" $h={12}>预设名称 ▾</PanelTitle>
          <PresetList>
            {presets.map((p) => (
              <Preset key={p.text} $level={p.level} $head={p.head}>
                <Icon n={p.level === 2 || p.closed ? 'right' : 'down'} s={6} />
                {p.icon && <Bright><Icon n={p.icon} s={10} /></Bright>}
                {p.text}
              </Preset>
            ))}
          </PresetList>
        </PresetPanel>
      </EncoderSide>
      <QueueSide>
        <QueueRow $h={55} $tone="#555" $bg="#232323">自动对监视</QueueRow>
        <QueueRow $h={14} $tone="#555" $bg="#2d2d2d" />
        <QueueRow $h={16} $tone="#7c7c7c" $bg="#1a1a1a">项目_AME\合成</QueueRow>
        <QueueRow $h={14} $tone="#555" $bg="#212121" />
        <QueueRow $h={14} $tone="#7c7c7c" $bg="#1a1a1a">_AME\合成 1_</QueueRow>
        <QueueSpace />
        <QueueRow $h={19} $tone="#4c4c4c" $bg="#282828">GPU 加速(Cu</QueueRow>
        <QueueFoot />
      </QueueSide>
    </EncoderGrid>
  </EncoderWindow>
);

const ExportDialog = () => (
  <Dialog role="dialog" aria-label="导出设置">
    <WinTitle $h={19}>
      <MenuItem as="span">导出设置</MenuItem>
      <WinButtons>
        <Tool aria-label="最小化"><Svg viewBox="0 0 16 16" $s={7}><path d="M0 8h16" {...line} stroke="#ddd" /></Svg></Tool>
        <Tool aria-label="最大化"><Svg viewBox="0 0 16 16" $s={7}><path d="M2 1h12v14H2z" {...line} stroke="#b5b5b5" /></Svg></Tool>
        <Tool aria-label="关闭"><Svg viewBox="0 0 16 16" $s={8}><path d="m1 1 14 14M15 1 1 15" {...line} stroke="#b5b5b5" /></Svg></Tool>
      </WinButtons>
    </WinTitle>
    <DialogBody>
      <Preview>
        <NoPreview>无可用预览</NoPreview>
        <Transport>
          <Line $blue>00:00:00:00</Line>
          <Markers>
            <Svg viewBox="0 0 16 16" $s={7}><path d="M16 0v16H0z" /></Svg>
            <Svg viewBox="0 0 16 16" $s={7}><path d="M0 0v16h16z" /></Svg>
          </Markers>
          <TransportEnd>
            <Tool $on $w={12} aria-label="缩放">
              <Svg viewBox="0 0 16 16" $s={10}><path d="M1 1v4M15 1v4M0 3h16M4 8h8v6H4z" {...line} stroke="#5b86cc" /></Svg>
            </Tool>
            00:00:30:00
          </TransportEnd>
        </Transport>
        <Scrub type="range" min={0} max={30} defaultValue={0} aria-label="时间" />
        <Handles>
          <Svg viewBox="0 0 16 16" $s={6}><path d="M16 0v16H0z" /></Svg>
          <Svg viewBox="0 0 16 16" $s={6}><path d="M0 0v16h16z" /></Svg>
        </Handles>
        <RangeRow>源范围:
          <SelectBox $w={116}><Select defaultValue="a"><option value="a">工作区域</option></Select><Icon n="down" s={7} /></SelectBox>
        </RangeRow>
      </Preview>
      <Settings>
        <Group $top={12} $bottom={7}>
          <legend><Icon n="down" s={7} />导出设置</legend>
          <Field $label={48}>
            <label htmlFor="format">格式:</label>
            <FormatBox>
              <SelectBox $bg="#202020"><Select id="format" $small defaultValue="MP3"><option>MP3</option></Select><Icon n="down" s={7} /></SelectBox>
              <FormatMenu role="listbox">
                {formats.map((f) => (
                  <FormatItem key={f} role="option" aria-selected={f === 'MP3'} $hover={f === 'H.264'} $picked={f === 'MP3'}>
                    {f === 'MP3' && <Icon n="check" s={8} />}{f}
                  </FormatItem>
                ))}
              </FormatMenu>
            </FormatBox>
          </Field>
          <Field $label={48}>
            <span>预设:</span>
            <FieldEnd>
              <Tool type="button" aria-label="保存预设"><Icon n="save" s={11} /></Tool>
              <Tool type="button" aria-label="导入预设"><Icon n="import" s={11} /></Tool>
              <Tool type="button" aria-label="删除预设" $dim><Icon n="trash" s={10} /></Tool>
            </FieldEnd>
          </Field>
          <Field $label={48}><label htmlFor="note">注释:</label><TextBox id="note" /></Field>
          <Field $label={48} $h={20}><span>输出名称:</span></Field>
          <CheckRow $h={20} $tone="#555" $pad={6}><Tick type="checkbox" disabled />导出视频</CheckRow>
          <SummaryHead><Icon n="down" s={7} />摘 要</SummaryHead>
          <Summary>
            <dt>输出:</dt>
            <dd><PathLine><span>C:\用户</span><span>_AME\合成 1.mp3</span></PathLine>无预设<br />MP3</dd>
          </Summary>
          <Summary $gap>
            <dt>源:</dt>
            <dd><PathLine $end={48}><span>合成 1</span><span>.aep</span></PathLine>1920<br />无音频</dd>
          </Summary>
        </Group>
        <SettingTabs><Tab type="button">效果</Tab><Tab type="button" $on>音频</Tab></SettingTabs>
        <Group $top={14} $bottom={9}>
          <legend><Icon n="down" s={7} />基本音频设置</legend>
          <Field $label={54}><span>通道:</span><ChannelPick>立体声</ChannelPick></Field>
          <Field $label={54}>
            <label htmlFor="rate">音频比特率:</label>
            <SelectBox><Select id="rate" defaultValue="a"><option value="a">&nbsp;192 kbps</option></Select><Icon n="down" s={7} /></SelectBox>
          </Field>
          <Field $label={54}><span>编解码器质量:</span></Field>
        </Group>
        <Spacer />
        <Options>
          <CheckRow $h={20} $tone="#4e4e4e"><Tick type="checkbox" disabled />使用最高渲染质量</CheckRow>
          <CheckRow $h={20} $tone="#4e4e4e"><Tick type="checkbox" disabled />使用代理</CheckRow>
          <CheckRow $h={20} $tone="#a8a8a8"><Tick type="checkbox" />设置开始时间码</CheckRow>
          <CheckRow as="div" $h={20} $tone="#8c8c8c">时间插值:
            <SelectBox $tone="#4a4a4a" $w={90} $bg="#262626"><Select aria-label="时间插值" defaultValue="a"><option value="a">帧采样</option></Select></SelectBox>
          </CheckRow>
          <CheckRow as="div" $h={24} $tone="#8c8c8c">估计文件大小:&nbsp; 469 KB</CheckRow>
          <Actions>
            <Push type="button" $first>元数据...</Push>
            <Push type="button" $main>确定</Push>
            <Push type="button">取消</Push>
          </Actions>
        </Options>
        <Pointer viewBox="0 0 110 122" aria-hidden="true">
          <path
            d="m78 14-25 15 5 8-51 77 4 3 58-75 8 1z"
            fill="#ee4b45" stroke="#ee4b45" strokeWidth="2" strokeLinejoin="round"
          />
          <path d="M97 3v10l2-2 2 3 1-1-1-3h3z" fill="#fff" stroke="#111" strokeWidth=".5" />
        </Pointer>
      </Settings>
    </DialogBody>
  </Dialog>
);

export default function App() {
  return (
    <Desk>
      <Global />
      <Bezel>
        <Screen>
          <AfterEffects />
          <MediaEncoder />
          <ExportDialog />
        </Screen>
      </Bezel>
      <Caption>选择<b>H.264</b></Caption>
    </Desk>
  );
}
